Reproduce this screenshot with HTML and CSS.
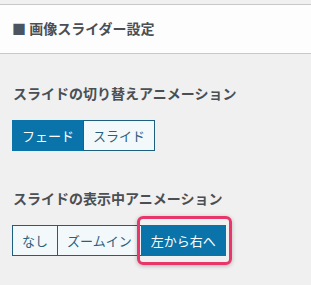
FILE: index.html
```html
<!DOCTYPE html>
<html lang="ja">
<head>
    <meta charset="UTF-8" />
    <title>画像スライダー設定</title>
    <link rel="stylesheet" href="styles.css">
</head>
<body>
    <div class="panel-head">
        <h2><span class="mark">■</span> 画像スライダー設定</h2>
    </div>

    <div class="panel-body">
        <div class="field">
            <h3>スライドの切り替えアニメーション</h3>
            <div class="btn-group">
                <a class="btn active">フェード</a>
                <a class="btn">スライド</a>
            </div>
        </div>

        <div class="field">
            <h3>スライドの表示中アニメーション</h3>
            <div class="btn-group">
                <a class="btn">なし</a>
                <a class="btn">ズームイン</a>
                <span class="highlight"><a class="btn active">左から右へ</a></span>
            </div>
        </div>
    </div>
</body>
</html>
```

FILE: styles.css
```css
/* --- Base --- */
* {
    margin: 0;
    padding: 0;
    box-sizing: border-box;
}

body {
    font-family: "Noto Sans CJK JP", "Noto Sans", sans-serif;
    background-color: #f0f0f0;
    color: #3c434a;
    padding-top: 4px;
    min-height: 100vh;
}

/* --- Panel header --- */
.panel-head {
    background-color: #fdfdfd;
    border-top: 1px solid #c8c8c8;
    border-bottom: 1px solid #c8c8c8;
    height: 50px;
    display: flex;
    align-items: center;
    padding-left: 12px;
    padding-bottom: 3px;
}

.panel-head h2 {
    font-size: 14px;
    font-weight: bold;
    color: #4a4f54;
    line-height: 20px;
}

.mark {
    color: #4a5560;
}

/* --- Fields --- */
.panel-body {
    padding: 29px 12px 30px;
}

.field h3 {
    font-size: 14px;
    font-weight: bold;
    color: #4a4f54;
    line-height: 20px;
    padding-left: 1px;
    margin-bottom: 17px;
}

.field + .field {
    margin-top: 37px;
}

/* --- Button group --- */
.btn-group {
    display: flex;
    align-items: center;
}

.btn {
    display: block;
    height: 31px;
    line-height: 29px;
    padding: 0 9px;
    font-size: 13px;
    color: #2b5f7d;
    background-color: #f3f8fb;
    border: 1px solid #1c5f7e;
    cursor: pointer;
}

.btn + .btn {
    margin-left: -1px;
}

.btn.active {
    background-color: #0a73aa;
    border-color: #0a73aa;
    color: #fff;
}

/* annotation box around the selected option (net size zero) */
.highlight {
    display: block;
    margin: -9px -6px -9px -5px;
    padding: 6px 3px 6px 1px;
    border: 3px solid #e8356a;
    border-radius: 6px;
    box-shadow: 0 1px 4px rgba(0, 0, 0, 0.25);
    position: relative;
}
```
